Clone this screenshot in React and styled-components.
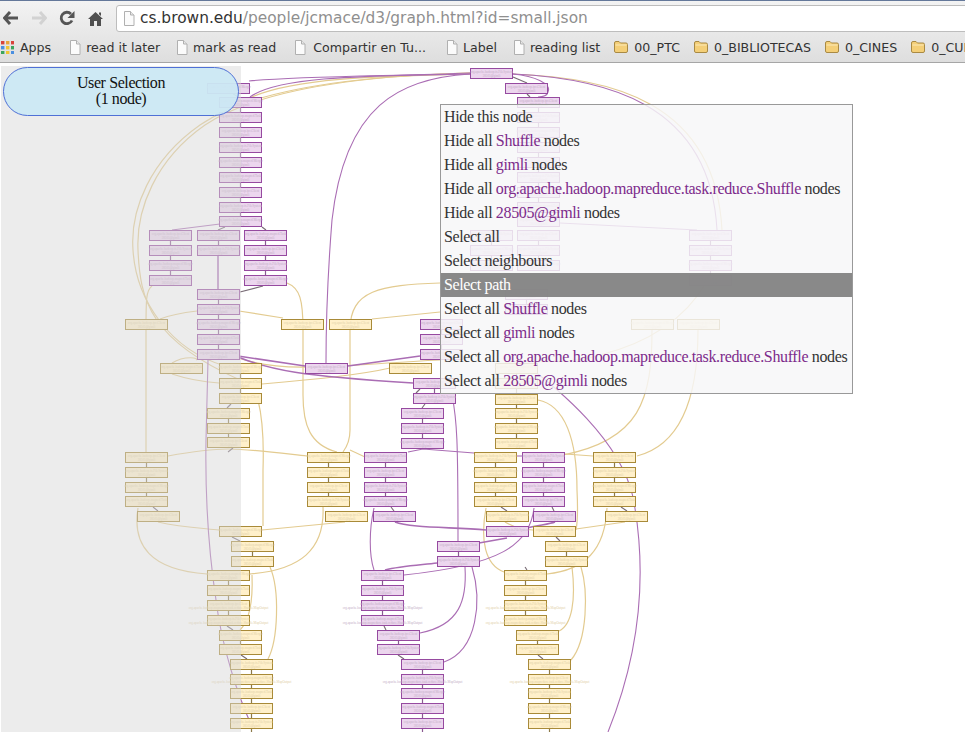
import React from "react";
import styled, { createGlobalStyle } from "styled-components";

const GlobalStyle = createGlobalStyle`
    html, body {
        margin: 0;
        padding: 0;
        width: 965px;
        height: 732px;
        overflow: hidden;
        background: #fff;
    }
`;

const Page = styled.div`
    display: flex;
    flex-direction: column;
    width: 965px;
    height: 732px;
    overflow: hidden;
    font-family: "DejaVu Sans", sans-serif;
`;
const Browser = styled.div`
    flex: none;
    height: 63px;
    box-sizing: border-box;
    border-top: 1px solid #64789a;
    border-bottom: 1px solid #a6a6a6;
    background: linear-gradient(#f3f3f3, #dedede);
`;
const Toolbar = styled.div`
    display: flex;
    align-items: center;
    height: 31px;
    box-sizing: border-box;
    padding-top: 3px;
`;
const NavGroup = styled.div`
    display: flex;
    gap: 6px;
    margin-right: 10px;
`;
const NavButton = styled.div`
    display: flex;
    align-items: center;
    justify-content: center;
    width: 22px;
    height: 22px;
`;
const Omnibox = styled.div`
    display: flex;
    align-items: center;
    flex: 1;
    height: 27px;
    margin-right: -4px;
    padding-left: 6px;
    box-sizing: border-box;
    background: #fff;
    border: 1px solid #bdbdbd;
    border-radius: 3px;
    font-size: 15.4px;
    gap: 5px;
`;
const UrlHost = styled.span`
    color: #333;
`;
const UrlPath = styled.span`
    color: #8f8f8f;
`;
const BookmarkBar = styled.div`
    display: flex;
    align-items: center;
    height: 30px;
    padding-left: 1px;
    gap: 16px;
    overflow: hidden;
    white-space: nowrap;
    font-size: 12.6px;
    color: #333;
`;
const Bookmark = styled.div`
    display: flex;
    align-items: center;
    flex: none;
    gap: ${(p) => p.$gap}px;
    margin-left: ${(p) => p.$shift || 0}px;
`;
const Canvas = styled.div`
    position: relative;
    flex: 1;
    overflow: hidden;
`;
const EdgeLayer = styled.svg`
    position: absolute;
    left: 0;
    top: 0;
`;
const GraphNode = styled.div`
    position: absolute;
    width: 43px;
    height: 11px;
    box-sizing: border-box;
    display: flex;
    flex-direction: column;
    align-items: center;
    justify-content: center;
    border: 1px solid ${(p) => (p.$kind === "p" ? "#964aa0" : "#a88a38")};
    background: ${(p) => (p.$kind === "p" ? "#ecd6ee" : "#fff0ca")};
    color: ${(p) => (p.$kind === "p" ? "#c4aec7" : "#dfd0a8")};
    font-family: "Liberation Serif", serif;
    font-size: 3.2px;
    line-height: 4px;
    white-space: nowrap;
`;
const SelectionPanel = styled.div`
    position: absolute;
    left: 1px;
    top: 3px;
    width: 240px;
    bottom: 0;
    background: rgba(215, 215, 215, 0.48);
`;
const SelectionPill = styled.div`
    position: absolute;
    left: 3px;
    top: 4px;
    width: 236px;
    height: 49px;
    box-sizing: border-box;
    padding-bottom: 2px;
    display: flex;
    align-items: center;
    justify-content: center;
    text-align: center;
    border: 1px solid #4f70d6;
    border-radius: 25px;
    background: rgba(203, 233, 245, 0.9);
    font-family: "Liberation Serif", serif;
    font-size: 16px;
    letter-spacing: -0.4px;
    line-height: 16px;
    color: #111;
`;
const Menu = styled.div`
    position: absolute;
    left: 440px;
    top: 41px;
    width: 413px;
    box-sizing: border-box;
    border: 1px solid #999;
    background: rgba(247, 247, 248, 0.84);
    font-family: "Liberation Serif", serif;
    font-size: 16px;
    letter-spacing: -0.36px;
    color: #333;
`;
const MenuItem = styled.div`
    height: 24px;
    line-height: 24px;
    padding-left: 3px;
    white-space: nowrap;
    background: ${(p) => (p.$active ? "rgba(128, 128, 128, 0.93)" : "transparent")};
    color: ${(p) => (p.$active ? "#fff" : "inherit")};
`;
const Keyword = styled.span`
    color: #7d2b8b;
`;

const PURPLE = "#aa6db4";
const YELLOW = "#e3cb90";

// x, then the y of every node stacked in that column (page coordinates)
const STACKS = [
    ["p", 470, [68]], ["p", 505, [83]], ["p", 517, [97, 112, 127, 142, 157, 172, 187, 202, 216]],
    ["p", 207, [83]], ["p", 219, [97, 112, 127, 142, 157, 172, 187, 202, 216]],
    ["p", 149, [230, 245, 260, 275]], ["p", 197, [230, 245]], ["p", 244, [230, 245, 260, 275]],
    ["p", 197, [289, 304, 319, 334, 349]], ["p", 470, [230, 245, 260]], ["p", 517, [230, 245, 260]],
    ["p", 689, [230, 245, 260, 275]], ["p", 505, [289, 304]],
    ["y", 125, [319]], ["y", 281, [319]], ["y", 329, [319]], ["y", 631, [319]], ["y", 677, [319]],
    ["y", 160, [363]], ["y", 389, [363]], ["y", 219, [363, 378, 393]], ["y", 207, [408, 423, 437]],
    ["y", 495, [363, 378, 394, 408, 423, 438]],
    ["p", 420, [319, 334, 349]], ["p", 305, [363]], ["p", 413, [378, 393]], ["p", 401, [408, 423, 438]],
    ["y", 125, [452, 467, 482, 496]], ["y", 137, [511]], ["y", 219, [526]], ["y", 231, [541, 556]],
    ["y", 207, [570, 585, 600, 615]], ["y", 219, [630, 644]], ["y", 230, [659, 674, 688, 703, 718, 733]],
    ["y", 307, [452, 467, 482, 496]], ["y", 325, [511]],
    ["p", 364, [452, 467, 482, 496]], ["p", 373, [511]], ["p", 437, [541, 556]],
    ["p", 361, [570, 585, 600, 615]], ["p", 377, [630, 644]], ["p", 401, [659, 674, 688, 703, 718, 733]],
    ["y", 474, [452, 467, 482, 496]], ["p", 522, [452, 467, 482, 496]], ["y", 593, [452, 467, 482, 496]],
    ["y", 486, [511]], ["p", 533, [511]], ["y", 605, [511]], ["p", 486, [526]], ["y", 533, [526]],
    ["y", 545, [541, 556]], ["y", 504, [570, 585, 600, 615]], ["y", 516, [630, 644]],
    ["y", 528, [659, 674, 688, 703, 718, 733]],
];

// nodes whose second label line is wider than the box
const WIDE_NODES = ["207:600", "207:615", "361:600", "361:615", "504:600", "504:615", "230:674", "401:674", "528:674"];

const SHORT_LINKS = [
    [153, 507, 158, 511], [232, 537, 240, 541], [227, 626, 233, 630], [241, 655, 247, 659],
    [391, 507, 394, 511], [384, 626, 386, 630], [398, 655, 404, 659], [501, 507, 507, 511],
    [552, 507, 554, 511], [621, 507, 627, 511], [556, 537, 560, 541], [525, 567, 527, 570],
    [538, 655, 543, 659], [231, 404, 227, 408], [425, 404, 422, 408], [233, 448, 228, 452],
    [420, 389, 416, 393], [513, 77, 527, 83], [527, 94, 530, 97], [225, 227, 218, 230],
    [262, 227, 266, 230], [263, 286, 240, 292], [232, 93, 238, 97],
];

const PURPLE_EDGES = [
    "M470 73 C400 76 300 76 249 81",
    "M470 74 C380 76 280 75 250 97",
    "M470 74 C400 78 345 105 332 220 C328 270 326 320 326 363",
    "M513 74 C600 78 710 100 717 230",
    "M513 74 C535 76 552 84 548 92 C547 96 543 97 538 97",
    "M520 360 C560 390 620 440 633 497 C645 560 645 640 608 732",
    "M208 360 L206 440 C205 500 210 560 216 600 C222 650 240 700 250 722",
    "M452 395 C457 420 458 440 458 541",
    "M374 508 C369 530 369 555 374 570",
    "M534 508 C530 545 500 565 404 575",
    "M465 567 C467 600 460 625 420 633",
    "M472 567 C482 600 478 650 444 662",
    "M408 452 L423 449 L474 453",
    "M517 456 L522 456",
    "M220 224 L172 230",
    "M560 223 L697 230",
];
const PURPLE_THICK = [
    "M238 356 L305 366",
    "M238 357 C270 370 300 376 413 383",
    "M348 366 L420 356",
    "M385 570 C400 566 420 565 437 563",
    "M395 522 C410 528 450 527 486 530",
    "M527 528 C540 525 550 524 555 522",
    "M479 543 L507 538",
    "M218 256 L218 289",
];
const YELLOW_EDGES = [
    "M470 74 C400 76 300 76 252 97",
    "M470 73 C350 76 250 90 200 125 C150 160 130 210 133 250 C136 300 170 350 225 366",
    "M470 73 C350 76 255 92 205 125 C155 160 136 210 138 250 C140 300 150 340 240 380",
    "M513 74 C610 78 715 100 722 230",
    "M706 283 C690 310 660 340 600 355 C570 365 530 360 505 362",
    "M652 330 C652 400 640 440 563 455",
    "M698 330 C698 400 680 445 637 456",
    "M538 400 C565 405 577 440 577 490 C578 510 578 520 576 530",
    "M238 358 C290 375 350 364 440 360",
    "M262 384 C310 380 360 375 390 368",
    "M172 374 C190 380 205 382 219 383",
    "M172 363 C185 355 200 358 196 360",
    "M287 283 C300 288 303 300 303 330 L303 395 C303 425 310 445 337 452",
    "M440 283 C380 285 350 290 350 330 L350 430 C350 440 346 448 343 452",
    "M372 319 L440 312",
    "M239 311 L283 318",
    "M197 311 C180 313 170 315 160 319",
    "M146 330 L146 452",
    "M152 286 C146 290 146 300 146 330",
    "M258 400 C263 420 264 440 263 470 L263 526",
    "M168 456 C190 452 210 449 228 449 C250 449 280 453 307 456",
    "M350 450 L365 457",
    "M565 454 L593 456",
    "M158 522 C180 527 200 528 219 530",
    "M262 530 L345 522",
    "M138 508 C132 545 150 570 207 574",
    "M323 507 C325 550 300 570 250 574",
    "M270 567 C280 590 278 640 268 659",
    "M252 575 C253 600 250 620 240 630",
    "M486 508 C480 540 485 565 504 572",
    "M547 574 C585 570 605 550 607 508",
    "M572 567 C576 600 572 625 559 631",
    "M581 567 C588 590 588 640 571 660",
    "M576 529 L625 522",
    "M505 522 C515 528 525 530 533 530",
];

const MENU = [
    ["Hide this node"],
    ["Hide all ", "Shuffle", " nodes"],
    ["Hide all ", "gimli", " nodes"],
    ["Hide all ", "org.apache.hadoop.mapreduce.task.reduce.Shuffle", " nodes"],
    ["Hide all ", "28505@gimli", " nodes"],
    ["Select all"],
    ["Select neighbours"],
    ["Select path"],
    ["Select all ", "Shuffle", " nodes"],
    ["Select all ", "gimli", " nodes"],
    ["Select all ", "org.apache.hadoop.mapreduce.task.reduce.Shuffle", " nodes"],
    ["Select all ", "28505@gimli", " nodes"],
];

const LABELS = [
    "org.apache.hadoop.mapred.Task",
    "org.apache.hadoop.ipc.Client",
    "org.apache.hadoop.fs.FileSystem",
    "org.apache.hadoop.mapred.Merger",
];

const BackIcon = ({ color }) => (
    <svg width="16" height="14" viewBox="0 0 16 14">
        <path d="M7 1 L1.5 7 L7 13 M2 7 H15" fill="none" stroke={color} strokeWidth="3" />
    </svg>
);
const ForwardIcon = ({ color }) => (
    <svg width="16" height="14" viewBox="0 0 16 14">
        <path d="M9 1 L14.5 7 L9 13 M14 7 H1" fill="none" stroke={color} strokeWidth="3" />
    </svg>
);
const ReloadIcon = () => (
    <svg width="16" height="16" viewBox="0 0 16 16">
        <path d="M13 10.5 A5.7 5.7 0 1 1 12 4" fill="none" stroke="#555" strokeWidth="2.8" />
        <path d="M15.5 1 V8 H8.5 Z" fill="#555" />
    </svg>
);
const HomeIcon = () => (
    <svg width="15" height="15" viewBox="0 0 15 15">
        <path d="M7.5 1 L15 8 H13 V15 H9 V10 H6 V15 H2 V8 H0 Z M11 1.5 H13 V5 L11 3.2 Z" fill="#4f4f4f" />
    </svg>
);
const PageIcon = () => (
    <svg width="12" height="15" viewBox="0 0 12 15">
        <path d="M1.5 .5 H7.5 L11 4 V14.5 H1.5 Z" fill="#fbfbfb" stroke="#b0b0b0" />
        <path d="M7.5 .5 V4 H11" fill="#e8e8e8" stroke="#b0b0b0" />
    </svg>
);
const FolderIcon = () => (
    <svg width="14" height="12" viewBox="0 0 14 12">
        <path d="M.5 2 Q.5 .5 2 .5 H5 L6.5 2 H12 Q13.5 2 13.5 3.5 V10 Q13.5 11.5 12 11.5 H2 Q.5 11.5 .5 10 Z" fill="#f4cf78" stroke="#a98a44" />
        <path d="M1.5 4 H12.5" stroke="#fbe9b8" />
    </svg>
);
const APP_COLORS = ["#d9433b", "#e8a33a", "#d9433b", "#4a8fe0", "#f0c534", "#3ba55d", "#3ba55d", "#f0c534", "#4a8fe0"];
const AppsIcon = () => (
    <svg width="13" height="13" viewBox="0 0 13 13">
        {APP_COLORS.map((c, i) => (
            <rect key={i} x={(i % 3) * 5} y={Math.floor(i / 3) * 5} width="3.4" height="3.4" fill={c} />
        ))}
    </svg>
);

// icon, label, gap between icon and label, extra room before the item
const BOOKMARKS = [
    ["page", "read it later", 5, 2],
    ["page", "mark as read", 5, 0],
    ["page", "Compartir en Tu...", 7, 2],
    ["page", "Label", 5, 4],
    ["page", "reading list", 5, 0],
    ["folder", "00_PTC", 6, -2],
    ["folder", "0_BIBLIOTECAS", 6, -2],
    ["folder", "0_CINES", 6, -2],
    ["folder", "0_CULTURA", 6, -2],
];

const Edges = () => (
    <EdgeLayer width="965" height="669" viewBox="0 63 965 669" fill="none">
        {YELLOW_EDGES.map((d, i) => <path key={i} d={d} stroke={YELLOW} strokeWidth="1.2" />)}
        {PURPLE_EDGES.map((d, i) => <path key={i} d={d} stroke={PURPLE} strokeWidth="1.1" />)}
        {PURPLE_THICK.map((d, i) => <path key={i} d={d} stroke={PURPLE} strokeWidth="1.6" />)}
        {STACKS.map(([kind, x, ys]) =>
            ys.slice(1).map((y, i) => (
                <line
                    key={`${x}-${y}`}
                    x1={x + 21.5}
                    x2={x + 21.5}
                    y1={ys[i] + 11}
                    y2={y}
                    stroke={kind === "p" ? "#8a5a92" : "#8d7a4a"}
                    strokeWidth="1.2"
                />
            ))
        )}
        {SHORT_LINKS.map(([x1, y1, x2, y2], i) => (
            <line key={i} x1={x1} y1={y1} x2={x2} y2={y2} stroke="#776a74" strokeWidth="1.1" />
        ))}
    </EdgeLayer>
);

const Graph = () => (
    <>
        <Edges />
        {STACKS.map(([kind, x, ys]) =>
            ys.map((y, i) => (
                <GraphNode key={`${x}-${y}`} $kind={kind} style={{ left: x, top: y - 63 }}>
                    <span>{LABELS[(x + i) % 4]}</span>
                    <span>
                        {WIDE_NODES.includes(`${x}:${y}`)
                            ? "org.apache.hadoop.mapreduce.task.reduce.Shuffle.MapOutput"
                            : "28505@gimli"}
                    </span>
                </GraphNode>
            ))
        )}
    </>
);

const App = () => {
    return (
        <Page>
            <GlobalStyle />
            <Browser>
                <Toolbar>
                    <NavGroup>
                        <NavButton><BackIcon color="#555" /></NavButton>
                        <NavButton><ForwardIcon color="#d2d2d2" /></NavButton>
                        <NavButton><ReloadIcon /></NavButton>
                        <NavButton><HomeIcon /></NavButton>
                    </NavGroup>
                    <Omnibox>
                        <PageIcon />
                        <span>
                            <UrlHost>cs.brown.edu</UrlHost>
                            <UrlPath>/people/jcmace/d3/graph.html?id=small.json</UrlPath>
                        </span>
                    </Omnibox>
                </Toolbar>
                <BookmarkBar>
                    <Bookmark $gap={6}>
                        <AppsIcon />
                        Apps
                    </Bookmark>
                    {BOOKMARKS.map(([icon, label, gap, shift]) => (
                        <Bookmark key={label} $gap={gap} $shift={shift}>
                            {icon === "page" ? <PageIcon /> : <FolderIcon />}
                            {label}
                        </Bookmark>
                    ))}
                </BookmarkBar>
            </Browser>
            <Canvas>
                <Graph />
                <SelectionPanel />
                <SelectionPill>User Selection<br />(1 node)</SelectionPill>
                <Menu>
                    {MENU.map(([before, keyword, after], i) => (
                        <MenuItem key={i} $active={before === "Select path"}>
                            {before}
                            {keyword && <Keyword>{keyword}</Keyword>}
                            {after}
                        </MenuItem>
                    ))}
                </Menu>
            </Canvas>
        </Page>
    );
};
export default App;
